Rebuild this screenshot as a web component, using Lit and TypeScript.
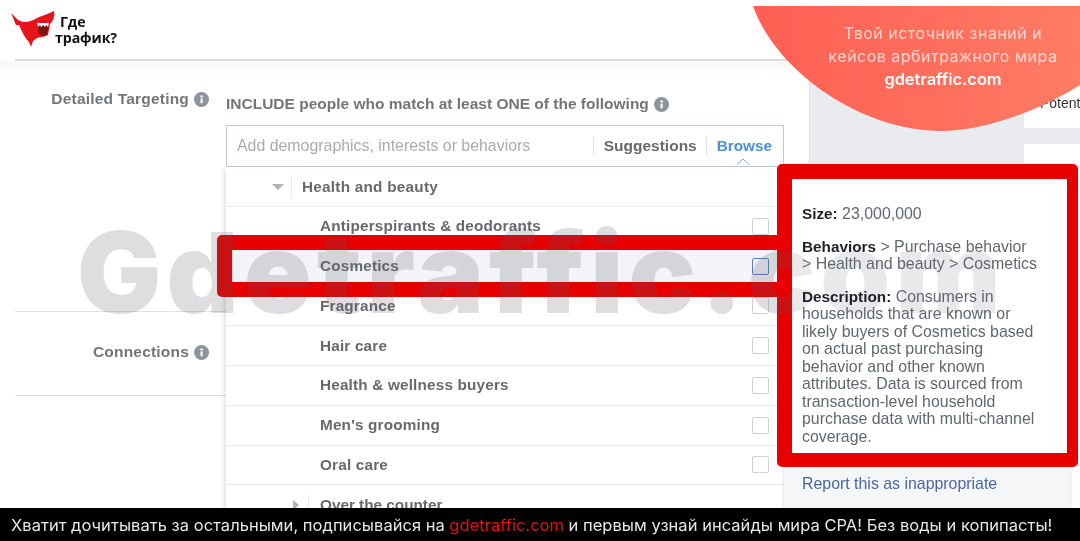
import { LitElement, html, css, svg } from "lit";
import { customElement } from "lit/decorators.js";

const info = html`<svg class="info" viewBox="0 0 16 16" width="15" height="15"><circle cx="8" cy="8" r="8" fill="#8d949e"/><rect x="7" y="7" width="2.2" height="5" fill="#fff"/><circle cx="8.1" cy="4.7" r="1.3" fill="#fff"/></svg>`;

const rows = ["Antiperspirants & deodorants", "Cosmetics", "Fragrance", "Hair care", "Health & wellness buyers", "Men's grooming", "Oral care"];

@customElement("app-root")
export class AppRoot extends LitElement {
  static styles = css`
    :host { display: block; width: 1080px; height: 541px; }
    * { box-sizing: border-box; }
    .page { position: relative; width: 1080px; height: 541px; overflow: hidden; background: #fff; font-family: "Liberation Sans", Arial, sans-serif; display: flex; flex-direction: column; filter: blur(0.4px); }
    .top { height: 61px; flex: none; padding-left: 15px; }
    .top-inner { height: 61px; border-bottom: 2px solid #dcdcde; display: flex; align-items: flex-start; margin-left: -15px; padding-left: 10px; padding-top: 10px; position: relative; }
    .top-inner::before { content: ""; position: absolute; left: 0; bottom: -2px; width: 15px; height: 2px; background: #fff; }
    .logo-text { font-family: "Open Sans", "Noto Sans", sans-serif; font-weight: 700; font-size: 14.2px; line-height: 16px; color: #111; margin-left: -1px; letter-spacing: -0.1px; padding-top: 1px; }
    .logo-text .l1 { display: block; padding-left: 5px; padding-top: 3px; }
    .main { flex: 1; display: flex; min-height: 0; background: linear-gradient(#f7f7f8, #fff 14px); }
    .left { width: 226px; flex: none; padding-left: 15px; }
    .sec { display: flex; justify-content: flex-end; align-items: flex-start; gap: 5px; padding-right: 17px; border-bottom: 1px solid #dddfe2; }
    .sec.a { height: 251px; padding-top: 28px; }
    .sec.b { height: 84px; padding-top: 30px; }
    .label { font-size: 15.5px; font-weight: 700; line-height: 20px; color: #72767b; letter-spacing: 0.2px; }
    .info { flex: none; margin-top: 3px; }
    .center { width: 558px; flex: none; padding-top: 33px; }
    .head { display: flex; align-items: center; gap: 5px; height: 20px; font-size: 15.5px; font-weight: 700; color: #72767b; white-space: nowrap; }
    .head .info { margin-top: 0; }
    .input { margin-top: 11px; height: 42px; border: 1px solid #bdc7d8; display: flex; align-items: center; padding: 0 11px 0 10px; background: #fff; position: relative; font-size: 15.5px; }
    .ph { flex: 1; color: #a8abb0; font-size: 15.9px; white-space: nowrap; }
    .tab { font-weight: 700; color: #66696d; }
    .sep { width: 1px; height: 18px; background: #dddfe2; margin: 0 9.5px; }
    .tab.on { color: #4a90d9; font-size: 15.3px; }
    .chev { position: absolute; left: 509px; bottom: 1px; width: 14px; height: 7px; }
    .drop { box-shadow: -2px 2px 4px rgba(0,0,0,.12); height: 341px; overflow: hidden; background: #fff; }
    .dhead { height: 40px; display: flex; align-items: center; border-bottom: 1px solid #e9eaed; padding-left: 46px; font-size: 15.3px; font-weight: 700; color: #66696d; letter-spacing: 0.25px; }
    .tri { width: 0; height: 0; border-left: 6.5px solid transparent; border-right: 6.5px solid transparent; border-top: 6px solid #b0b3b8; }
    .vs { width: 1px; height: 22px; background: #e9eaed; margin: 0 10px 0 7px; }
    .row { height: 39.75px; display: flex; align-items: center; justify-content: space-between; padding: 0 15px 0 94px; border-bottom: 1px solid #e9eaed; font-size: 15.3px; font-weight: 700; color: #66696d; letter-spacing: 0.18px; }
    .row.hover { background: #f3f4f7; }
    .cb { width: 17px; height: 17px; border: 1px solid #ced0d4; border-radius: 2px; background: #fff; flex: none; }
    .row.hover .cb { border-color: #5b7fc0; background: #eef1f8; }
    .more { height: 30px; display: flex; align-items: center; padding-left: 67px; font-size: 15.3px; font-weight: 700; color: #66696d; padding-top: 10px; }
    .rtri { width: 0; height: 0; border-top: 5px solid transparent; border-bottom: 5px solid transparent; border-left: 6px solid #b0b3b8; }
    .more .vs { margin: 0 11px 0 9px; }
    .right { flex: 1; display: flex; margin-left: 25px; border-left: 1px solid #dddfe2; }
    .gray { width: 214px; background: #e9ebee; flex: none; }
    .side { flex: 1; padding: 32px 0 0 16px; font-size: 14px; color: #333; overflow: hidden; white-space: nowrap; line-height: 20px; }
    .bar { height: 16px; background: #e9ebee; margin: 15px 4px 0 -16px; }
    .foot { height: 33px; flex: none; background: #000; color: #e8e8e8; font-family: Inter, "Noto Sans", sans-serif; font-size: 16.5px; letter-spacing: 0.03px; display: flex; align-items: center; padding-left: 11px; white-space: nowrap; position: relative; z-index: 6; }
    .foot b { font-weight: 400; color: #e3150f; margin: 0 4.5px; }
    .frame { position: absolute; border: 15px solid #e60000; border-radius: 5px; z-index: 2; }
    .frame.big { left: 777px; top: 164px; width: 301px; height: 303px; border-width: 15px 11px 14px 15px; background: #fff; }
    .frame.row-f { left: 217px; top: 235px; width: 575px; height: 62px; }
    .mark { position: absolute; left: 77px; top: 207px; z-index: 3; font-family: Inter, "Liberation Sans", sans-serif; font-weight: 900; font-size: 112px; line-height: 130px; color: rgba(90,90,100,.2); white-space: nowrap; letter-spacing: 5px; }
    .tip { position: absolute; left: 792px; top: 179px; width: 275px; height: 274px; background: rgba(255,255,255,.35); z-index: 4; padding: 26px 0 0 10px; font-size: 15.9px; line-height: 17.5px; color: #606770; white-space: nowrap; }
    .tip p { margin: 0 0 15px; }
    .tip b { color: #1d2129; font-size: 15.3px; }
    .report { position: absolute; left: 784px; top: 467px; width: 286px; height: 41px; background: #f5f6f7; z-index: 1; padding: 8px 0 0 18px; font-size: 15.9px; line-height: 18px; color: #4a67a1; box-shadow: 0 1px 3px rgba(0,0,0,.2); }
    .promo { position: absolute; left: 753px; top: 6px; width: 327px; height: 126px; z-index: 5; display: block; }
    .promo-text { position: absolute; left: 806px; top: 23px; width: 274px; text-align: center; z-index: 5; font-family: Inter, "Noto Sans", sans-serif; font-size: 15.8px; line-height: 22.5px; color: rgba(255,255,255,.72); letter-spacing: 0.6px; white-space: nowrap; }
    .promo-text b { display: block; font-weight: 600; color: #fff; font-size: 16.4px; letter-spacing: 0; }
  `;

  render() {
    return html`
      <div class="page">
        <div class="top">
          <div class="top-inner">
            <svg width="46" height="38" viewBox="10 10 46 38">
              <path d="M11 13 L18 20 L23 22 C29 22 34 20 39 17 C45 15 50 13 54 11 C55 15 54 20 50 24 L48 35 C44 37 40 37 37 38 L33 41 L31 47 L29 42 C25 38 22 32 19 25 L16 25 Z" fill="#e8141c"/>
              <path d="M37 23 L49 23 L47 35 C44 36 41 36 39 34 Z" fill="#7d1414"/>
              <path d="M37 23 L49 23 L48 27 L46 25 L45 27 L43 25 L41 27 L40 25 L38 27 Z" fill="#fff"/>
            </svg>
            <div class="logo-text"><span class="l1">Где</span>трафик?</div>
          </div>
        </div>

        <div class="main">
          <div class="left">
            <div class="sec a"><span class="label">Detailed Targeting</span>${info}</div>
            <div class="sec b"><span class="label">Connections</span>${info}</div>
          </div>
          <div class="center">
            <div class="head">INCLUDE people who match at least ONE of the following ${info}</div>
            <div class="input">
              <span class="ph">Add demographics, interests or behaviors</span>
              <span class="sep"></span><span class="tab">Suggestions</span><span class="sep"></span><span class="tab on">Browse</span>
              <svg class="chev" viewBox="0 0 14 7"><path d="M1 6.5 L7 1 L13 6.5" fill="none" stroke="#7fa6d6" stroke-width="1"/></svg>
            </div>
            <div class="drop">
              <div class="dhead"><span class="tri"></span><span class="vs"></span>Health and beauty</div>
              ${rows.map((r) => html`<div class="row ${r === "Cosmetics" ? "hover" : ""}"><span>${r}</span><span class="cb"></span></div>`)}
              <div class="more"><span class="rtri"></span><span class="vs"></span>Over the counter</div>
            </div>
          </div>
          <div class="right">
            <div class="gray"></div>
            <div class="side">Potential reach<div class="bar"></div></div>
          </div>
        </div>

        <div class="foot">Хватит дочитывать за остальными, подписывайся на<b>gdetraffic.com</b>и первым узнай инсайды мира CPA! Без воды и копипасты!</div>

        <div class="report">Report this as inappropriate</div>
        <div class="frame row-f"></div>
        <div class="frame big"></div>
        <div class="mark">Gdetraffic.com</div>
        <div class="tip">
          <p><b>Size:</b> 23,000,000</p>
          <p><b>Behaviors</b> &gt; Purchase behavior<br />&gt; Health and beauty &gt; Cosmetics</p>
          <p><b>Description:</b> Consumers in<br />households that are known or<br />likely buyers of Cosmetics based<br />on actual past purchasing<br />behavior and other known<br />attributes. Data is sourced from<br />transaction-level household<br />purchase data with multi-channel<br />coverage.</p>
        </div>

        <svg class="promo" viewBox="753 6 327 126">
          <defs><linearGradient id="g" x1="0" x2="1" y1="0" y2="0"><stop offset="0" stop-color="#ff5f52"/><stop offset="1" stop-color="#ff7b64"/></linearGradient></defs>
          ${svg`<path d="M753 6 C775 70 860 131 940 131 C985 131 1040 110 1080 85 V6 Z" fill="url(#g)"/>`}
        </svg>
        <div class="promo-text">Твой источник знаний и<br />кейсов арбитражного мира<b>gdetraffic.com</b></div>
      </div>
    `;
  }
}
